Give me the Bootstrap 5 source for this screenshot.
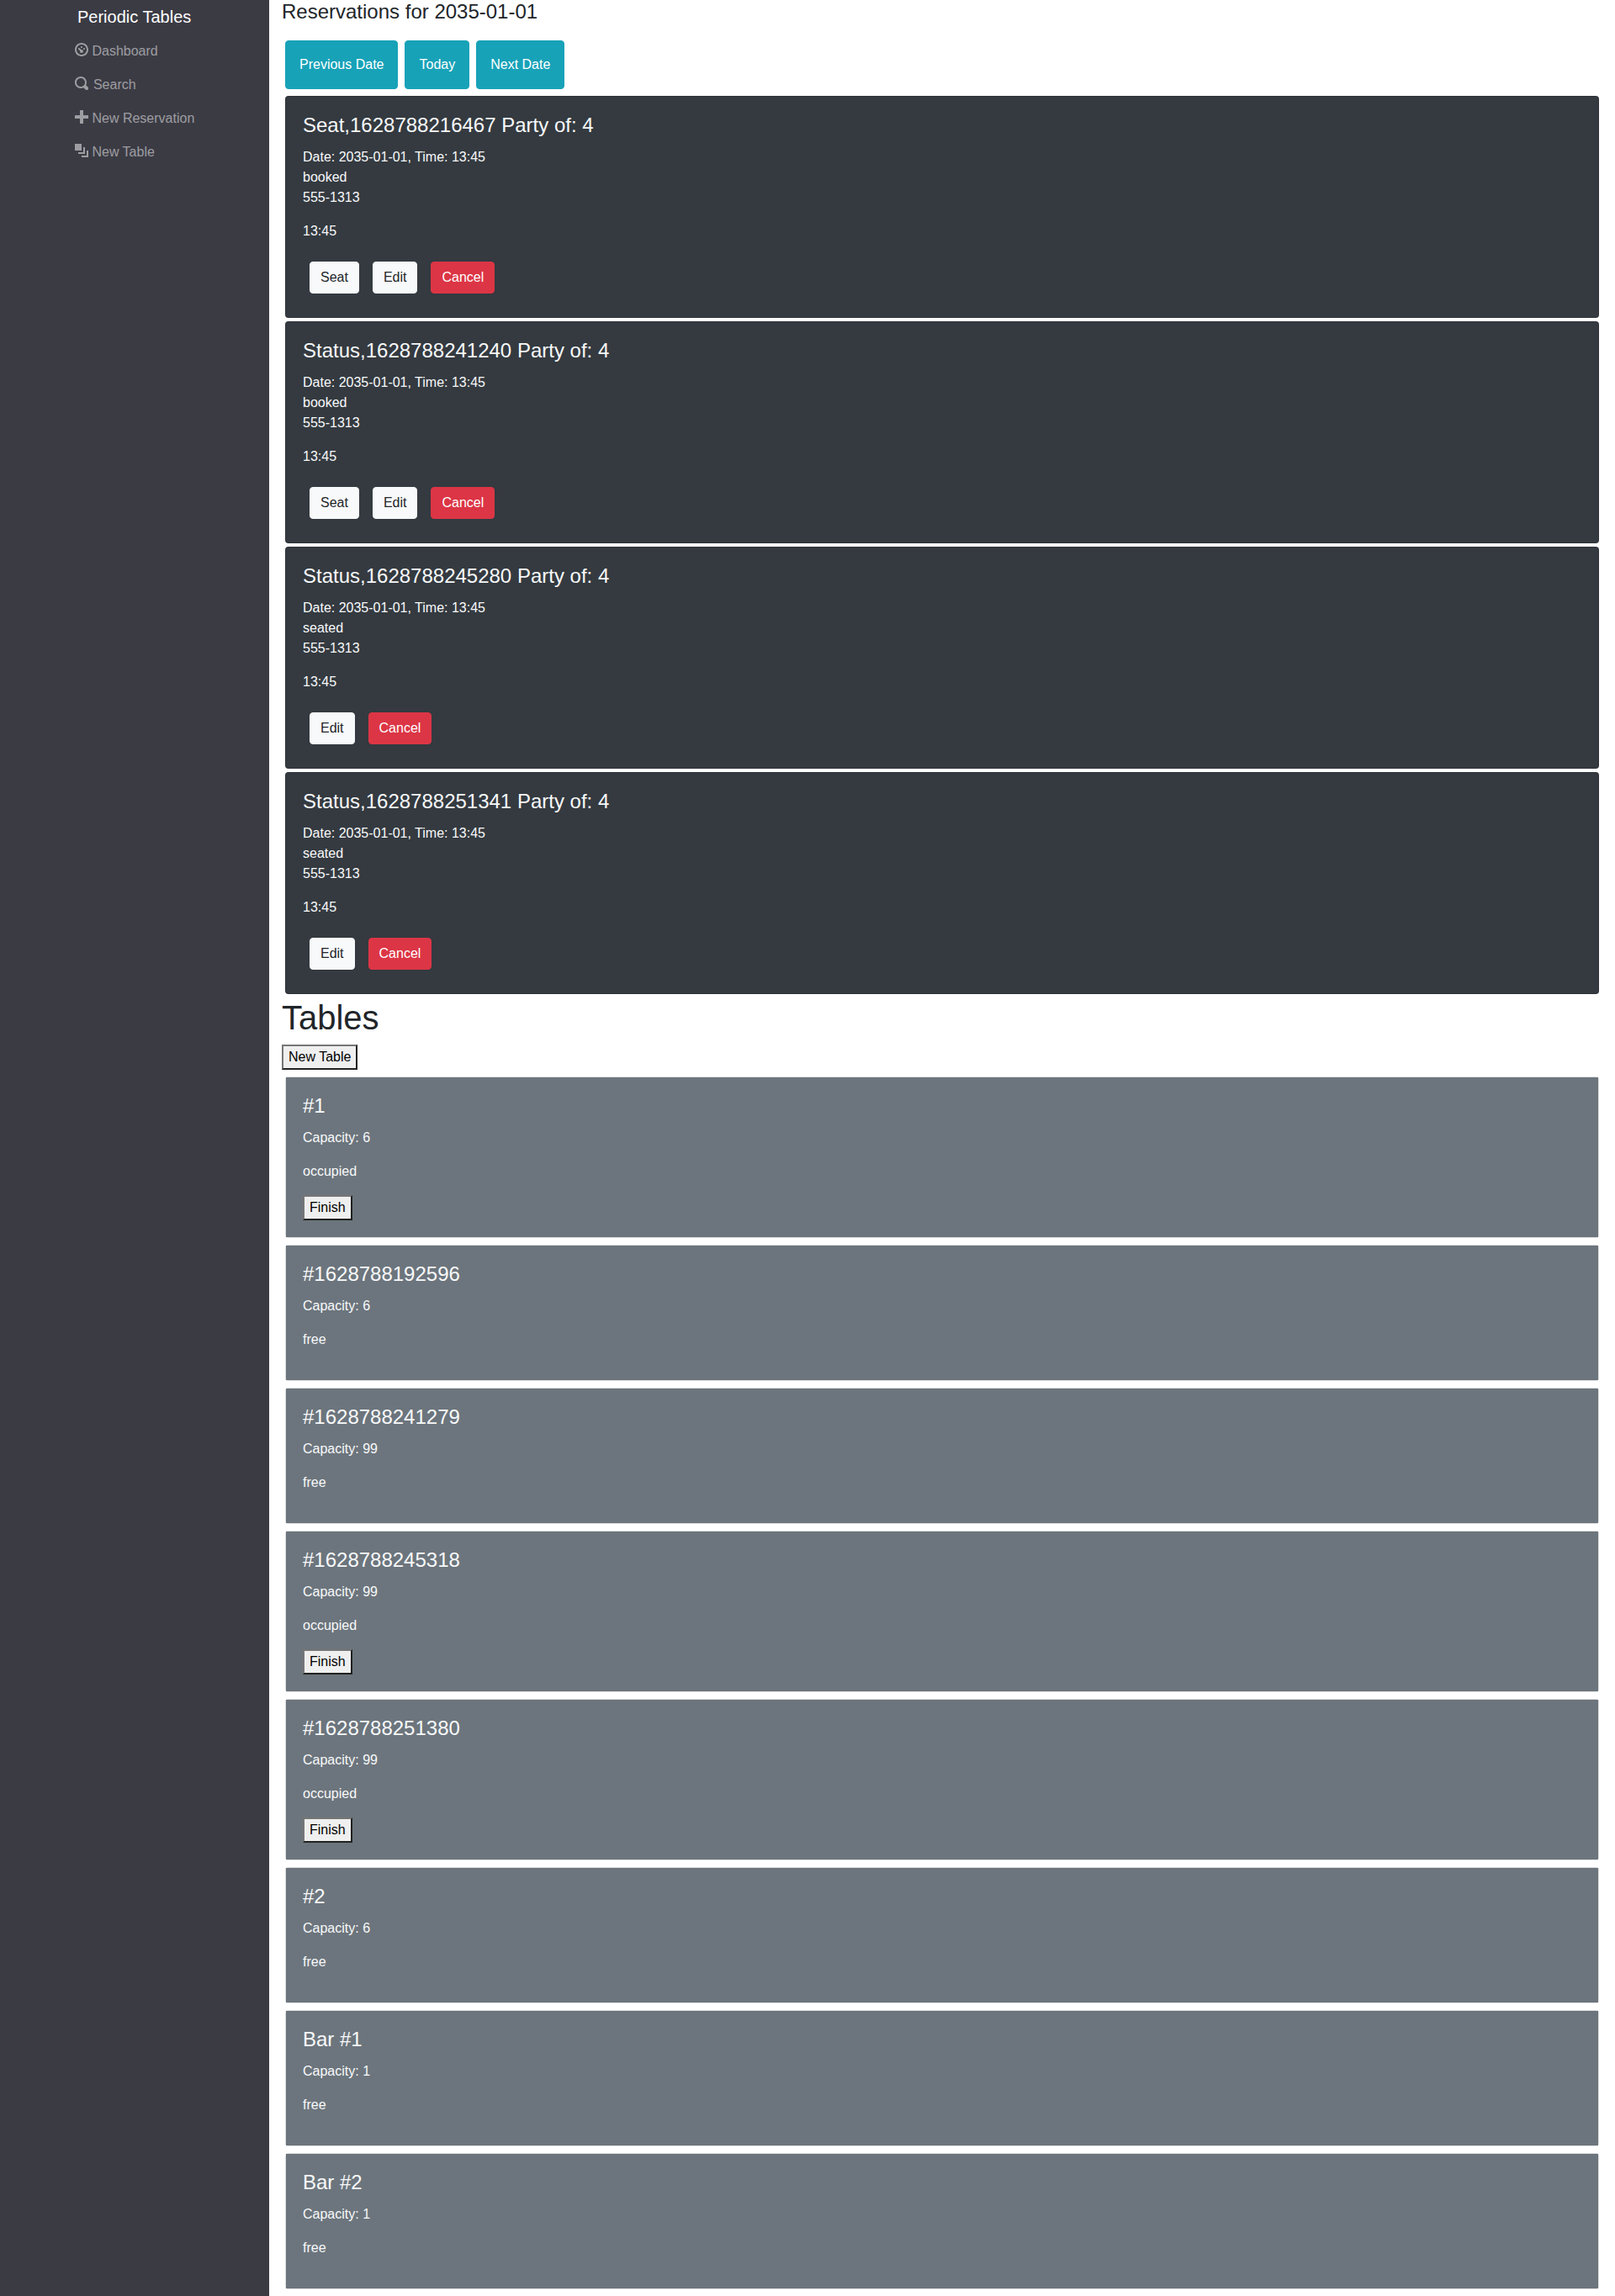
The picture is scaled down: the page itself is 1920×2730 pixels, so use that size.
<!DOCTYPE html>
<html lang="en">
<head>
<meta charset="utf-8">
<meta name="viewport" content="width=device-width, initial-scale=1">
<title>Periodic Tables</title>
<link href="https://cdn.jsdelivr.net/npm/bootstrap@5.3.0/dist/css/bootstrap.min.css" rel="stylesheet">
<style>
body{font-family:"Liberation Sans",sans-serif;color:#212529}
.side-col{background:#3b3b44;min-height:2730px;padding-left:89px}
.brand-title{font-size:20px;line-height:25px;padding:8px 0 8px 3px;color:#fff;text-decoration:none}
.side-col .nav-link{color:rgba(255,255,255,.5);padding:8px 0;line-height:24px}
.oi-icon{width:16px;height:16px;fill:currentColor;display:inline-block;vertical-align:-1px}
.oi-search{margin-right:1.5px}
.main-col{padding:0 15px}
h4{font-size:24px;line-height:28px}
.tables-title{font-size:40px;line-height:48px}
.btn{border-radius:4px}
.btn-light{color:#212529}
.btn-teal,.btn-teal:hover{background:#17a2b8;border-color:#17a2b8;color:#fff}
.card{border-radius:4px}
.card-body{padding:20px}
.card-title{margin-bottom:12px}
.res-card{background:#343a40;color:#f8f9fa;border-color:rgba(0,0,0,.125)}
.table-card{border-color:rgba(0,0,0,.125)}
.table-card .card-body{background:#6c757d;color:#f8f9fa}
.plain-btn{background:#efefef;color:#000;border:2px solid;border-color:#767676 #212121 #212121 #767676;border-radius:0;padding:1px 6px;line-height:24px;display:block}
</style>
</head>
<body>
<div class="container-fluid p-0">
<div class="row g-0">
<nav class="col-2 side-col">
  <a class="brand-title d-block" href="#">Periodic Tables</a>
  <ul class="nav flex-column">
    <li><a class="nav-link" href="#"><svg class="oi-icon" viewBox="0 0 8 8"><path d="M4 0c-2.2 0-4 1.8-4 4s1.8 4 4 4 4-1.8 4-4-1.8-4-4-4zm0 1c1.66 0 3 1.34 3 3s-1.34 3-3 3-3-1.34-3-3 1.34-3 3-3zm0 1c-.28 0-.5.22-.5.5s.22.5.5.5.5-.22.5-.5-.22-.5-.5-.5zm-1.66 1a.5.5 0 0 0-.19.84l.91.91c-.02.08-.06.16-.06.25 0 .55.45 1 1 1s1-.45 1-1-.45-1-1-1c-.09 0-.17.04-.25.06l-.91-.91a.5.5 0 0 0-.44-.16.5.5 0 0 0-.06 0zm3.16 0c-.28 0-.5.22-.5.5s.22.5.5.5.5-.22.5-.5-.22-.5-.5-.5z"/></svg> Dashboard</a></li>
    <li><a class="nav-link" href="#"><svg class="oi-icon oi-search" viewBox="0 0 8 8"><path d="M3.5 0c-1.93 0-3.5 1.57-3.5 3.5s1.57 3.5 3.5 3.5c.59 0 1.17-.14 1.66-.41a1 1 0 0 0 .13.13l1 1a1.02 1.02 0 1 0 1.44-1.44l-1-1a1 1 0 0 0-.16-.13c.27-.49.44-1.06.44-1.66 0-1.93-1.55-3.5-3.5-3.5zm0 1c1.39 0 2.5 1.11 2.5 2.5 0 .66-.24 1.27-.66 1.72-.01.01-.02.02-.03.03a1 1 0 0 0-.13.13c-.44.4-1.04.63-1.69.63-1.39 0-2.5-1.11-2.5-2.5s1.11-2.5 2.5-2.5z"/></svg> Search</a></li>
    <li><a class="nav-link" href="#"><svg class="oi-icon" viewBox="0 0 8 8"><path d="M3 0v3h-3v2h3v3h2v-3h3v-2h-3v-3h-2z"/></svg> New Reservation</a></li>
    <li><a class="nav-link" href="#"><svg class="oi-icon" viewBox="0 0 8 8"><path d="M0 0v4h4v-4h-4zm5 2v3h-3v1h4v-4h-1zm2 2v3h-3v1h4v-4h-1z"/></svg> New Table</a></li>
  </ul>
</nav>
<main class="col-10 main-col">
  <h4 class="mb-3">Reservations for 2035-01-01</h4>
  <div class="d-flex">
    <button class="btn btn-teal p-3 m-1">Previous Date</button>
    <button class="btn btn-teal p-3 m-1">Today</button>
    <button class="btn btn-teal p-3 m-1">Next Date</button>
  </div>
  <div id="reservations">
    <div class="card res-card m-1"><div class="card-body">
      <h4 class="card-title">Seat,1628788216467 Party of: 4</h4>
      <p class="mb-3">Date: 2035-01-01, Time: 13:45<br>booked<br>555-1313</p>
      <p class="mb-3">13:45</p>
      <div class="d-flex"><button class="btn btn-light m-2">Seat</button><button class="btn btn-light m-2">Edit</button><button class="btn btn-danger m-2">Cancel</button></div>
    </div></div>
    <div class="card res-card m-1"><div class="card-body">
      <h4 class="card-title">Status,1628788241240 Party of: 4</h4>
      <p class="mb-3">Date: 2035-01-01, Time: 13:45<br>booked<br>555-1313</p>
      <p class="mb-3">13:45</p>
      <div class="d-flex"><button class="btn btn-light m-2">Seat</button><button class="btn btn-light m-2">Edit</button><button class="btn btn-danger m-2">Cancel</button></div>
    </div></div>
    <div class="card res-card m-1"><div class="card-body">
      <h4 class="card-title">Status,1628788245280 Party of: 4</h4>
      <p class="mb-3">Date: 2035-01-01, Time: 13:45<br>seated<br>555-1313</p>
      <p class="mb-3">13:45</p>
      <div class="d-flex"><button class="btn btn-light m-2">Edit</button><button class="btn btn-danger m-2">Cancel</button></div>
    </div></div>
    <div class="card res-card m-1"><div class="card-body">
      <h4 class="card-title">Status,1628788251341 Party of: 4</h4>
      <p class="mb-3">Date: 2035-01-01, Time: 13:45<br>seated<br>555-1313</p>
      <p class="mb-3">13:45</p>
      <div class="d-flex"><button class="btn btn-light m-2">Edit</button><button class="btn btn-danger m-2">Cancel</button></div>
    </div></div>
  </div>
  <h1 class="tables-title mb-2">Tables</h1>
  <button class="plain-btn mb-1">New Table</button>
  <div class="d-flex flex-column">
    <div class="card table-card m-1"><div class="card-body">
      <h4 class="card-title">#1</h4><p class="mb-3">Capacity: 6</p><p class="mb-3">occupied</p><button class="plain-btn">Finish</button>
    </div></div>
    <div class="card table-card m-1"><div class="card-body">
      <h4 class="card-title">#1628788192596</h4><p class="mb-3">Capacity: 6</p><p class="mb-3">free</p>
    </div></div>
    <div class="card table-card m-1"><div class="card-body">
      <h4 class="card-title">#1628788241279</h4><p class="mb-3">Capacity: 99</p><p class="mb-3">free</p>
    </div></div>
    <div class="card table-card m-1"><div class="card-body">
      <h4 class="card-title">#1628788245318</h4><p class="mb-3">Capacity: 99</p><p class="mb-3">occupied</p><button class="plain-btn">Finish</button>
    </div></div>
    <div class="card table-card m-1"><div class="card-body">
      <h4 class="card-title">#1628788251380</h4><p class="mb-3">Capacity: 99</p><p class="mb-3">occupied</p><button class="plain-btn">Finish</button>
    </div></div>
    <div class="card table-card m-1"><div class="card-body">
      <h4 class="card-title">#2</h4><p class="mb-3">Capacity: 6</p><p class="mb-3">free</p>
    </div></div>
    <div class="card table-card m-1"><div class="card-body">
      <h4 class="card-title">Bar #1</h4><p class="mb-3">Capacity: 1</p><p class="mb-3">free</p>
    </div></div>
    <div class="card table-card m-1"><div class="card-body">
      <h4 class="card-title">Bar #2</h4><p class="mb-3">Capacity: 1</p><p class="mb-3">free</p>
    </div></div>
  </div>
</main>
</div>
</div>
<script src="https://cdn.jsdelivr.net/npm/bootstrap@5.3.0/dist/js/bootstrap.bundle.min.js"></script>
</body>
</html>
